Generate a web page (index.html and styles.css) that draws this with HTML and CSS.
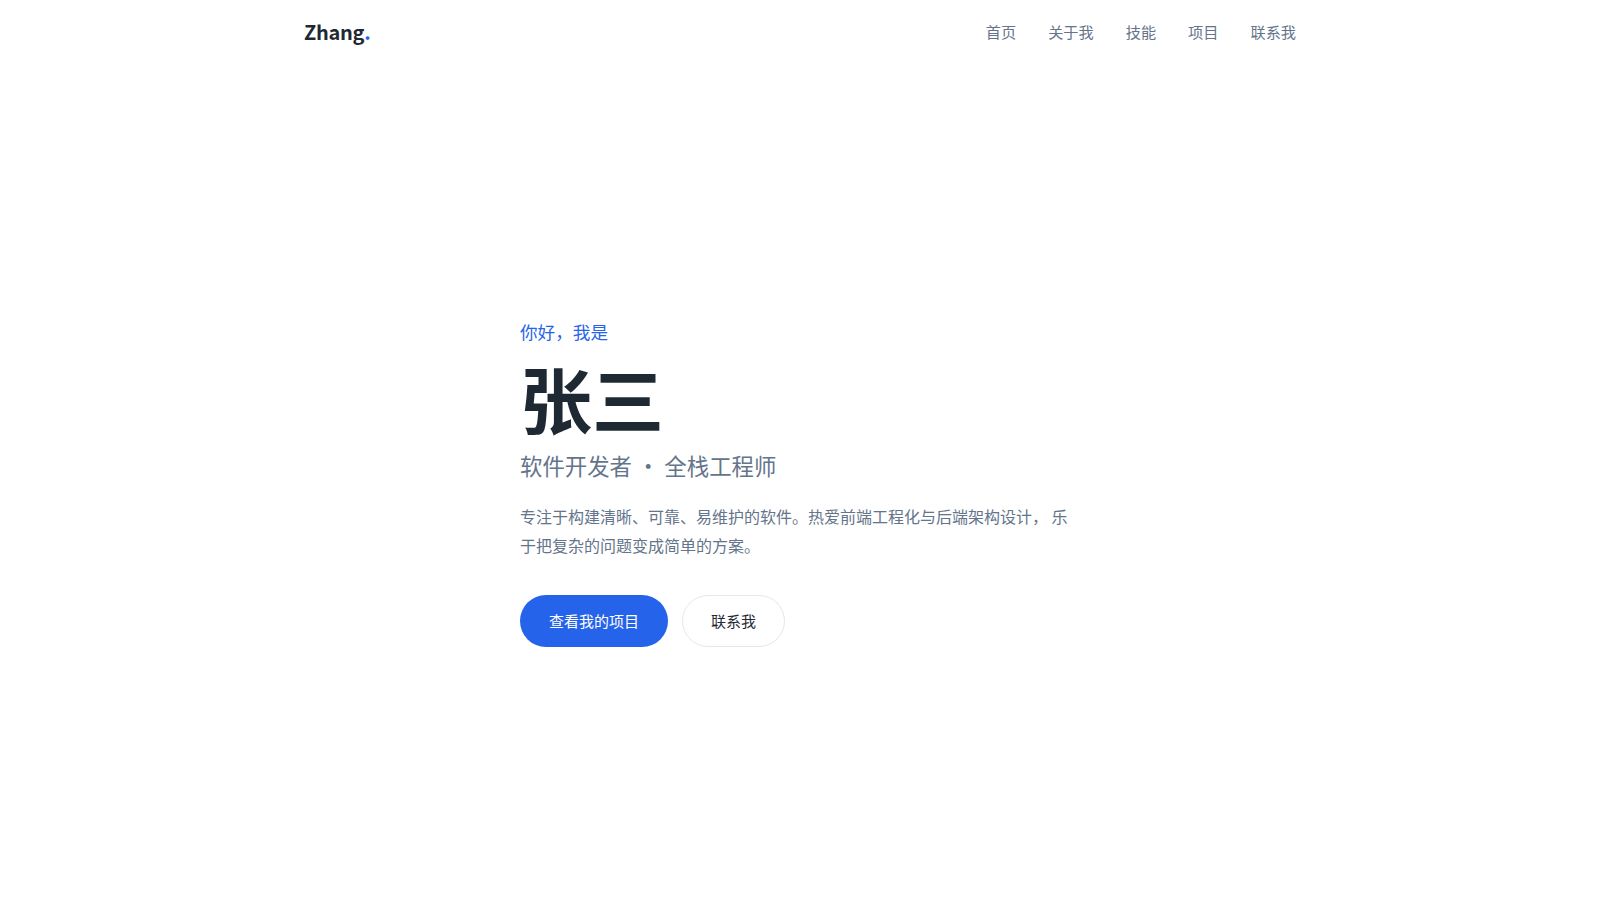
FILE: index.html
```html
<!DOCTYPE html>
<html lang="zh-CN">
<head>
<meta charset="utf-8">
<title>张三 · 个人主页</title>
<link rel="stylesheet" href="styles.css">
</head>
<body>
  <header class="site-header">
    <div class="header-inner">
      <a class="logo" href="#">Zhang<span class="logo-dot">.</span></a>
      <nav class="nav">
        <a href="#">首页</a>
        <a href="#">关于我</a>
        <a href="#">技能</a>
        <a href="#">项目</a>
        <a href="#">联系我</a>
      </nav>
    </div>
  </header>

  <main class="hero">
    <div class="hero-inner">
      <p class="greeting">你好，我是</p>
      <h1 class="name">张三</h1>
      <p class="role">软件开发者 · 全栈工程师</p>
      <p class="intro">专注于构建清晰、可靠、易维护的软件。热爱前端工程化与后端架构设计， 乐于把复杂的问题变成简单的方案。</p>
      <div class="actions">
        <a class="btn btn-primary" href="#">查看我的项目</a>
        <a class="btn btn-outline" href="#">联系我</a>
      </div>
    </div>
  </main>
</body>
</html>
```

FILE: styles.css
```css
* {
  box-sizing: border-box;
}

html,
body {
  margin: 0;
  padding: 0;
}

body {
  font-family: "Noto Sans CJK SC", "Noto Sans", sans-serif;
  color: #1f2933;
  background: #ffffff;
}

a {
  text-decoration: none;
  color: inherit;
}

/* Header */
.site-header {
  height: 64px;
}

.header-inner {
  max-width: 1040px;
  height: 100%;
  margin: 0 auto;
  padding: 0 24px 2px;
  display: flex;
  align-items: center;
  justify-content: space-between;
}

.logo {
  font-size: 20px;
  font-weight: 700;
  color: #1f2933;
  letter-spacing: -0.3px;
}

.logo-dot {
  color: #2563eb;
}

.nav {
  display: flex;
  gap: 32px;
}

.nav a {
  font-size: 15.2px;
  color: #64748b;
}

/* Hero */
.hero {
  min-height: 836px;
  padding-top: 2px;
  display: flex;
  align-items: center;
  justify-content: center;
}

.hero-inner {
  width: 560px;
}

.greeting {
  margin: 0 0 11px;
  font-size: 17.6px;
  line-height: 1.5;
  color: #2563eb;
}

.name {
  margin: 0 0 14px;
  font-size: 72px;
  line-height: 1.1;
  font-weight: 700;
  color: #1f2933;
}

.role {
  margin: 0 0 21px;
  font-size: 22.4px;
  line-height: 1.4;
  color: #64748b;
}

.intro {
  margin: 0 0 35px;
  font-size: 16px;
  line-height: 1.8;
  color: #64748b;
}

.actions {
  display: flex;
  gap: 14px;
}

.btn {
  display: inline-block;
  padding: 13px 28px;
  font-size: 15px;
  line-height: 24px;
  border-radius: 999px;
  border: 1px solid transparent;
}

.btn-primary {
  background: #2563eb;
  color: #ffffff;
}

.btn-outline {
  border-color: #e5e7eb;
  color: #1f2933;
}
```
